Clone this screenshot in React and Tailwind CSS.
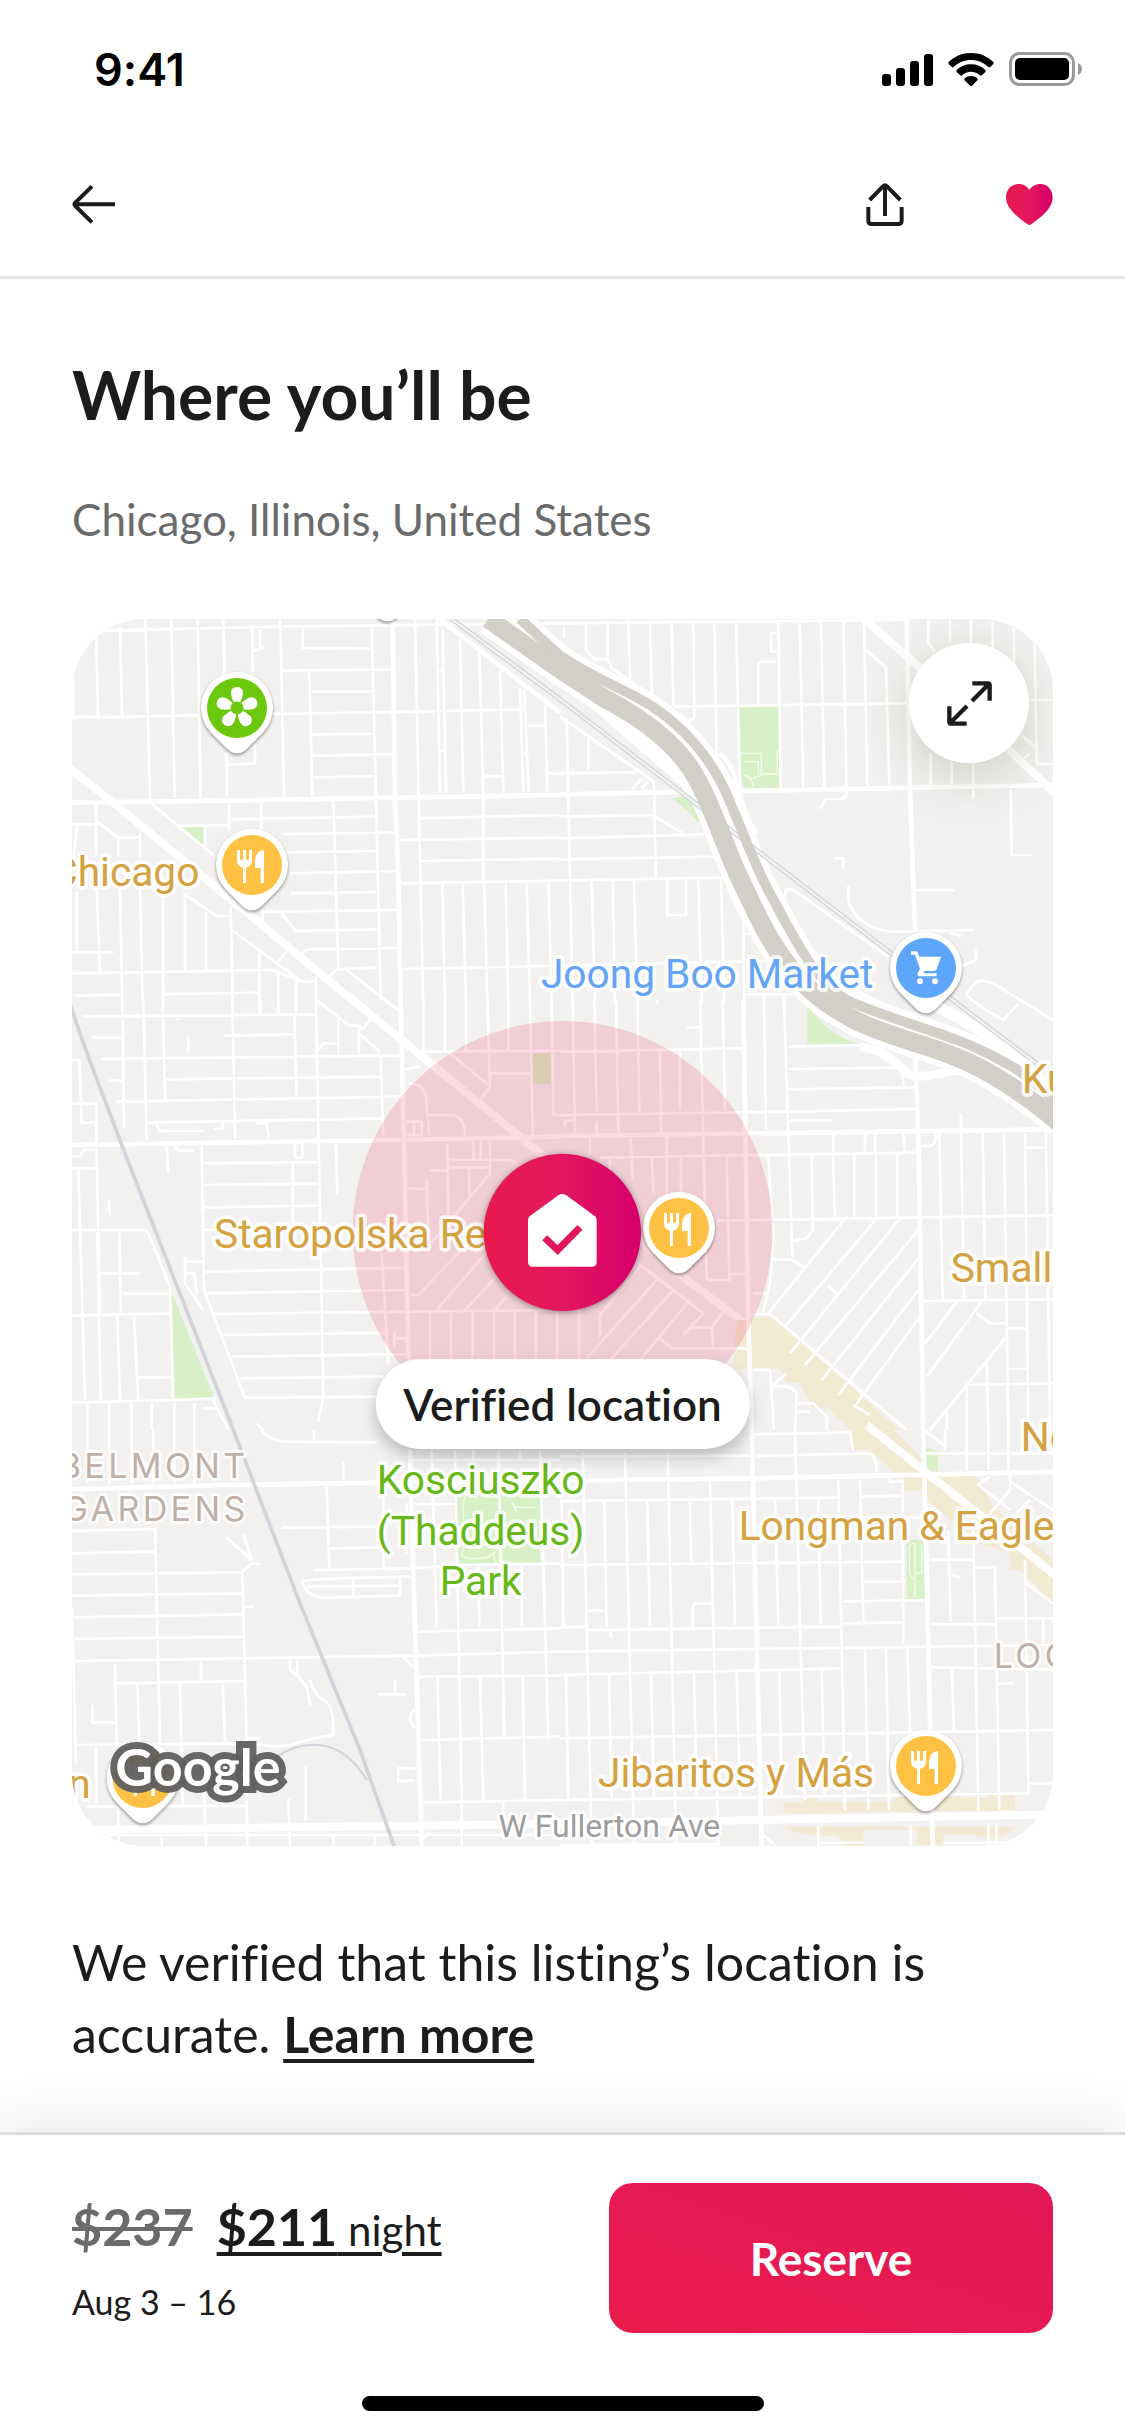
import { useState } from 'react';
import clsx from 'clsx';

// The map is drawn tile by tile, each tile in its own coordinates.
const TILES = [
  {
    id: 'nw',
    offset: 'translate(-36 -27)',
    minor:
      'M120 62L660 50L1500 40M108 60L114 318M180 50L186 316M256 27L270 568M334 30L344 565M413 27L422 565M490 30L494 200M500 430V560M577 50L578 190M661 27L672 560M748 188L757 558M935 50L948 560M40 200V320' +
      'M36 325L60 320L150 322L420 315M640 312L940 307L1390 298M668 182L995 178M728 55V114L930 116M755 245L940 244M757 374L940 371M757 437L998 433M757 502L940 499M600 60V118M580 122L615 113M502 464L585 460V400' +
      'M1065 27L1076 560L1090 1200M1130 30L1140 548M1148 60L1158 548M1200 85L1210 548M1258 125L1270 550V815M1320 180L1330 548M1380 235L1390 545M1393 240L1406 545M1455 285L1462 545M1405 346H1455M1465 490H1500M1272 500L1328 498M1135 180H1150M1140 422H1156M1385 430H1400' +
      'M275 582L460 735M860 1080L1020 1205M110 635L175 682H240M370 850L470 918H510M515 960L725 1115H765M108 585V740M508 580V660M604 578V660M820 570L835 1080M948 568L962 1170M240 670V745M175 682V740M50 650L42 740M36 643H105M350 648L505 645M435 650V710' +
      'M515 628L945 620M670 672L1008 668M680 727L945 723M690 790L1008 783M690 850L948 846M610 905L1012 900M665 910L708 963L950 958M740 1018L1015 1014M830 1078L950 1073M740 1018L715 1040M680 1025L650 1060M830 1078L808 1100' +
      'M50 845V1025M110 840L120 1085M180 840L187 1180M240 840L248 1180M308 850L310 1180M375 850V1080M438 905V1080M512 890L518 1180M598 1030V1210M608 900V945M655 1080V1210M708 1110V1215M768 1100V1180M36 1090L640 1080L725 1115M36 1027H160M48 1157L185 1154M310 1152L600 1148' +
      'M1080 625L1500 615M1020 690L1500 683M1080 753L1500 746M1025 820L1500 812M1030 1077L1500 1067M1147 820L1155 1180M1208 820L1218 1180M1273 820L1282 1180M1337 820L1345 1180M1400 820L1410 1180M1465 820L1475 1180',
    major: 'M36 578L500 572L1000 563L1500 555M998 27L1005 560L1015 800L1022 1180M1130 20L1500 308',
    avenue: 'M20 468L150 570L575 920L870 1165',
    park: 'M366 652H432V708Z',
  },
  {
    id: 'ne',
    offset: 'translate(1464 -27)',
    minor:
      'M0 40L1040 30M12 50V85M78 35V120L105 148H140M143 30V150L155 175L385 333L403 325L400 40M205 30L210 210M270 30L275 250M335 30L340 285M463 35L470 440M528 30L540 540M655 30L662 540M719 30L730 535M783 30L793 535M850 30L860 550Q855 568 830 567H795L782 597M912 30L922 530M915 118L978 172L988 525M595 285V160L602 155H650M650 70H633V125H650M330 290L1040 280' +
      'M1105 30V100L1125 125M1170 27V100M1233 27V100M1298 35V120M1362 50V160M1424 90L1430 460M1408 270H1479M1112 430V525M1175 455V525M1240 460V565M1385 375L1430 415M1385 450L1410 430M1430 462H1479M1352 540L1355 735H1415M1065 840H1185M865 828V870C880 930 940 965 1010 965L1240 960M825 745H852L848 775M675 930V850Q680 830 700 840L985 1040' +
      'M0 320L275 510Q285 525 283 560L287 800M20 325L38 1180M85 380V480M0 490L230 487M0 620L280 615M0 685L430 673M0 748L470 740M0 812L480 803M215 540L245 505M245 535L265 515M285 620L365 668M95 815L105 1180M158 812L165 1180M222 810L232 1180M322 810V915H378V810M415 805L425 1180M483 800L493 1180M550 930L553 1180M552 972H580M550 1153H700M612 1155V1180M672 1155V1180M0 1067L630 1052M292 1170V1180' +
      'M1220 1150L1250 1115Q1270 1108 1300 1120L1479 1230M1220 1150Q1215 1165 1330 1230L1375 1180M1248 1020V1050L1200 1070M1170 970L1205 978',
    major: 'M0 553L1500 525M1040 27L1050 540L1065 960M480 430C540 480 525 570 590 675',
    avenue: 'M910 25L1070 165L1500 562',
    park: 'M537 290H657L660 533H550L540 460ZM340 565L375 560L430 615L482 740L470 735L420 640ZM742 1180C760 1230 840 1290 900 1302H742Z',
    path: 'M542 430H604V495L580 505M550 455H595V490M604 492H652V420M552 495Q580 500 578 530',
  },
  {
    id: 'w',
    offset: 'translate(-36 1143)',
    minor:
      'M187 0L192 385M250 0L260 420M308 0L315 300M517 0L525 415M603 0V40M655 0V40M703 45L710 290M768 0L790 1190L775 1265M835 60V165M897 100V165M962 165L970 410M770 0L865 75L900 78L897 100L960 155M905 90L930 60M70 50L765 43M95 112H185M490 107L700 103M775 150L790 130H835M125 177L960 167H1020M145 242H185M315 238L960 230M170 305L1020 290M260 368L970 355M290 375L300 393H430M460 388L488 385V370M590 370H620L627 415M355 40V60M385 110V155' +
      'M36 310H110V365L65 370L58 180H36M108 370L120 940M36 470L60 468L70 450H105M36 505H105M345 440L355 452H405M320 440L325 520M145 600L150 645M705 430V472H727V430M828 430L832 585M425 440L432 870L555 1193L950 1190M430 490L770 487M432 555L775 551M432 622L775 617M432 690L700 685M698 490V680M435 815L1040 803M435 880L1045 870M465 942L1050 935M490 1005L975 998M515 1070L985 1063M540 1135L970 1130M965 760L985 1090' +
      'M36 690H255Q265 695 270 710L330 860L340 1200M120 820H240M183 880H325M178 690L183 940M36 947L330 940M55 505L75 1200M112 700L122 1200M172 950L180 1200M222 950L235 1205M235 1132H335M36 1208L340 1200L470 1195M82 1210V1290M148 1210V1290M215 1210V1290M275 1210V1290M343 1210V1290M403 1210V1290M460 1200L505 1290M430 1225H465M375 770V850L430 930M378 785H430M380 820H403L410 880M590 1270L610 1290' +
      'M1090 0V155M1155 0V155M1218 0V155M1345 0V155M1085 155L1500 152M1282 0L1290 260L1265 295M1170 160L1285 255M1285 220H1415M1410 0L1418 405M1475 0L1480 345L1530 347M1035 208L1080 200M1045 250Q1090 250 1098 290L1108 405M1105 345H1175Q1215 350 1215 405M1040 365H1085V405H1040M1062 365V405' +
      'M1162 430L1165 650M1165 480H1355L1375 495M1165 502H1290M1240 425V480H1262V425M1290 425V520L1105 740M1110 512H1165M1045 565L1100 567M1100 535L1105 700M1228 505V590M1050 885H1075L1260 690M1130 930L1290 745M1215 930L1300 840M1305 930L1340 890M1050 935L1560 930M1110 935V1090M1173 935V1090M1238 935V1090M1302 935V1090M1365 935V1090M1428 935V1090M1492 935V1090M1003 995V1040M1005 1015H1040M985 1063H1045',
    major: 'M36 435L1020 420L1500 410M1022 0L1032 430L1050 1290',
    avenue: 'M860 -15L1435 455L1860 825L2075 985L2460 1290',
    park: 'M330 865L463 1195Q400 1205 343 1195ZM1416 160H1473V252H1420Z',
  },
  {
    id: 'e',
    offset: 'translate(1464 1143)',
    district: 'M530 960H570L600 950L640 955L1020 1290H870L800 1220L760 1225L720 1150L680 1145L660 1105H580L520 1110Z',
    minor:
      'M38 0L45 400M103 0L110 335M168 0L175 400M232 0L238 335M300 150L303 400M360 150V330M420 0L440 840M488 0L495 330M612 0L618 390M672 0L697 770M0 155L550 145M380 82H420M0 345L690 335M15 380V362H40M110 365V400M685 140L920 135M690 207L1020 203M685 268L1065 262M690 362H815M690 335L1065 327M120 472L1075 458M90 415V465M150 475V520M212 415L218 540M275 470L280 580M320 410V590M363 470V590M500 470L508 830M625 465L640 720L630 850L610 935' +
      'M470 662L1530 645M820 400V455M915 400V455M945 400V455M1030 400L1035 455M755 465L758 690L740 715L700 722M818 460L825 650M883 460V650M948 460V650M1012 460V650M1085 438H1110Q1130 435 1128 395M1138 398L1148 900M1203 340V398L1212 900M1268 398L1277 900M1332 400L1345 1290M1395 400L1405 1290M1458 395L1470 1290M1398 443H1455M1090 903L1479 898M1030 205V260' +
      'M855 655L625 940M950 655L675 980M1020 655L690 1060M1075 690L735 1095M1075 775L785 1140M1075 870L835 1185M1080 950L890 1210M1190 905L1095 1030M1265 905L1100 1130M1335 1015L1110 1290M1215 1155L1479 1150M1250 940L1290 970H1335M1345 985H1400M1345 1107H1400M1160 1240V1290M1220 1160V1290M1280 1085L1285 1290M580 942H630L1040 1290M640 778H695L735 805M805 858L835 885M580 880H625' +
      'M440 840H510V822H560M235 790L430 940L370 1005M330 1045L560 1045M295 1010L335 1045M390 983H455L460 1045M455 983L490 935M240 800L120 945V1010M290 840L80 1075M340 870L150 1080M390 900L240 1080M58 930V1080M580 1110H630L642 1290M640 1160H690L710 1180L705 1290M640 1155L680 1120M710 1210H760L800 1250V1290M710 1235H750M880 1215L930 1245',
    major: 'M0 408L1500 388M550 0L565 960L575 1290M1065 160L1075 400L1090 1290',
  },
  {
    id: 'sw',
    offset: 'translate(-36 2433)',
    minor:
      'M82 0V160M148 0V160M215 0V160M280 0V160M343 0V160M403 0V160M605 0Q630 35 690 35L950 38M762 0V30M850 95V150M800 170L808 415M970 170V415M665 293L970 290M808 355L970 352M765 420L1050 415L1190 405L1500 400M725 455Q740 445 1050 440M725 455Q740 500 790 503L1020 497V445M740 470L1025 467M880 450V500' +
      'M36 303L285 297M36 370L285 365M36 433L545 427L575 400L600 403M575 390L550 310M575 390L500 322M36 497L545 490M36 562L545 553M36 627L550 620M45 693L1060 677L1500 665M285 290L300 940M547 430L560 940M550 530H580M165 700L170 940M423 695V750M172 760L550 753M232 760L238 940M360 760L368 1120M488 760L495 940M97 825V878H165M36 530L48 1000M48 945L560 940L650 950L690 945L760 925L820 915V880Q815 820 790 810Q760 790 750 750M690 690V720L712 737V690M712 737L740 770L752 830M560 925H600' +
      'M955 793H1035M1005 750V793M108 950V1120M80 1130L560 1127M430 1000L435 1180M560 1080L562 1248M685 1105L690 1248M737 1010V1170M175 1130V1248M305 1210V1248M438 1210V1248M820 1210V1248M945 1210V1248M110 1215H1480M1060 605L1500 595M1070 740L1500 737M1080 930L1500 920M1085 1118L1500 1110M1115 60L1130 590M1185 60L1205 1110M1255 410L1258 590M1315 60L1333 930M1385 410V590M1440 60L1465 930M1132 740L1142 1110M1260 740L1270 1110M1388 740L1395 1110M1065 222H1190M1050 90H1500M1240 60V90M1380 60V90' +
      'M1065 840Q1035 860 1065 895M1065 1015H1015V1055L1065 1050M1030 680L1060 712M1040 220V370M1205 1110V1248M1330 1115V1150M1085 1225L1110 1210',
    major: 'M36 178L500 165L1500 150M1050 60L1060 430L1075 900L1085 1260',
    avenue: 'M60 1200L1480 1182',
    park: 'M1187 195H1440V402H1195Z',
    path: 'M1205 380Q1215 330 1210 250T1250 205M1205 380Q1280 400 1310 360T1360 340M1355 215L1370 245M1365 232H1430M1300 375L1310 400',
  },
  {
    id: 'se',
    offset: 'translate(1464 2433)',
    district:
      'M875 0H1000L1130 130L1250 140L1300 230L1479 390V520L1380 420H1350V370L1260 340L1100 210L1090 180H1030V130L1000 125L930 60H875ZM670 1118H730V1105H775V1115H1000V1100L1130 1098L1280 1105V1095H1365V1140L670 1150ZM670 1190H1365V1200L1300 1230L1240 1215H1150V1245H1070V1200H910V1248H860L830 1215L780 1220L700 1205Z',
    minor:
      'M68 65L95 1248M195 65L222 1248M323 65L348 1248M450 150L475 1248M517 210L525 585M645 210L655 585M705 0L720 590L735 1110M775 210L782 580M835 150L855 1140M900 150L910 575M1028 150L1030 640M262 215L270 590M390 215L393 395M133 215L140 590M5 215L10 590M0 213L830 203M905 200L1025 197M0 405L1035 395M0 593L75 590M80 600L845 590M850 515L1090 510M850 580L1025 577M80 542H138M152 600V625M398 590V530L405 520H455M910 455H1035' +
      'M0 665L1479 645M0 735L850 715M0 925L1479 900M0 1110L1405 1090V1060H1479M18 735L25 1110M147 735L155 1110M273 735L282 1100M402 730L410 1100M530 725L540 1100M658 720L665 1100M785 720L793 1100M915 655L925 1140M978 655L987 1140M1042 650L1050 910M1165 300L1172 575M1240 300L1255 1140M1305 415L1318 1140M1395 390L1405 1060M1175 715L1182 900M1115 583H1305M1310 565H1479M1115 712L1479 718M1110 390L1240 388M1245 412H1305V500M1450 570V640M1400 460L1479 520M1175 435L1200 440M1315 760H1360' +
      'M580 13L870 8L880 60M590 77L930 70Q950 80 950 125M0 80L570 77M990 140V155H1030M1250 160L1350 240M1290 140L1250 165M1350 130V180L1290 250M1350 155L1479 240M1410 210L1370 250M1100 70H1479M1155 0V60M1220 0V120M1285 0V120M1345 0V120M1095 0L1150 45M905 262H1100M0 1245L480 1243M775 1185V1248M1052 1185V1248M1285 1180V1248M1310 1180V1248M610 1215L640 1240M775 1238H910M1150 1238H1479',
    major: 'M0 152L580 145L1500 125M575 0L605 1248M1090 0L1105 640L1118 1248',
    avenue: 'M920 -15L1500 447M0 1182L480 1172L1500 1153',
    park: 'M1098 50L1133 65V122H1100ZM1040 330H1090L1095 507H1040Z',
    path: 'M1048 430V350Q1050 340 1065 340V500M1085 345V430H1068M1048 430L1060 450',
  },
];

const EXPRESSWAY_WEST =
  'M-215 27L0 178L130 263C220 310 330 380 395 480C450 570 480 670 530 785C580 890 620 985 680 1060C740 1140 800 1185 880 1228C1000 1290 1150 1310 1280 1385C1370 1435 1430 1480 1500 1540';
const EXPRESSWAY_EAST =
  'M-120 27L0 137C100 205 200 240 270 285C370 350 440 430 490 530C540 640 580 760 630 850C690 960 760 1110 860 1170C1000 1235 1180 1270 1320 1350C1400 1390 1440 1430 1500 1490';
const COMMUTER_RAIL = 'M-325 27L0 268L1000 1035L1290 1255L1430 1360';

const FOOD_LABELS = [
  { text: 'Chicago', x: 382, y: 801, anchor: 'end' },
  { text: 'Staropolska Res', x: 426, y: 1888 },
  { text: 'Small', x: 2636, y: 1988 },
  { text: 'Ku', x: 2850, y: 1421 },
  { text: 'No', x: 2846, y: 2495 },
  { text: 'Longman & Eagle', x: 2000, y: 2763 },
  { text: 'Jibaritos y Más', x: 2406, y: 3503, anchor: 'end' },
  { text: 'n', x: 56, y: 3538, anchor: 'end' },
];

const FOOD_PINS = [
  { x: 540, y: 738 },
  { x: 1821, y: 1827 },
  { x: 2562, y: 3441 },
  { x: 212, y: 3477 },
];

function Pin({ x, y, color, children }) {
  return (
    <g transform={`translate(${x} ${y})`}>
      <path
        d="M-80 72L-30 122Q0 150 30 122L80 72A108 108 0 1 0 -80 72Z"
        fill="#fff"
        className="drop-shadow-[0_5px_5px_rgba(0,0,0,0.4)]"
      />
      <circle r="90" fill={color} />
      {children}
    </g>
  );
}

function Fork() {
  return (
    <g fill="#fff">
      <path d="M-45 -45h9v29h9v-29h9v29h9v-29h9v31q0 19-18 22V54h-9V8Q-45 5-45 -14Z" />
      <path d="M36 -45V54H26V9H9V-14Q11 -42 36 -45Z" />
    </g>
  );
}

function Flower() {
  return (
    <g fill="#fff">
      {[0, 72, 144, 216, 288].map((angle) => (
        <path
          key={angle}
          transform={`rotate(${angle})`}
          d="M0 -63C13 -63 19 -53 18 -43C17 -32 12 -24 10 -17Q0 -22 -10 -17C-12 -24 -17 -32 -18 -43C-19 -53 -13 -63 0 -63Z"
        />
      ))}
    </g>
  );
}

function Cart() {
  return (
    <g fill="#fff">
      <path d="M-45 -50H-30Q-26 -50 -24 -45L-20 -34H45L32 4Q30 9 24 9H-3L-9 16H32V25H-22Q-28 22 -25 16L-18 2L-33 -40H-45Z" />
      <circle cx="-18" cy="40" r="9" />
      <circle cx="27" cy="40" r="9" />
    </g>
  );
}

function Map() {
  return (
    <svg
      viewBox="0 0 2943 3681"
      className="block h-full w-full bg-[#f2f1f0] font-['Roboto',sans-serif]"
      role="img"
      aria-label="Map of Chicago around the listing"
    >
      <defs>
        <linearGradient id="brand" x1="0" x2="1" y1="0" y2="0">
          <stop offset="0" stopColor="#e8194a" />
          <stop offset="0.5" stopColor="#e3175f" />
          <stop offset="0.95" stopColor="#d7006b" />
        </linearGradient>
      </defs>

      {TILES.map((tile) => (
        <g key={tile.id} transform={tile.offset} fill="none" stroke="#fff">
          <path d={tile.district} fill="#f2ead2" stroke="none" />
          <path d={tile.park} fill="#d7f0c6" stroke="none" />
          <path d={tile.path} strokeWidth="4" strokeOpacity="0.7" />
          <path d={tile.minor} strokeWidth="8" strokeLinejoin="round" />
          <path d={tile.major} strokeWidth="14" />
          <path d={tile.avenue} strokeWidth="24" />
        </g>
      ))}

      {/* freight line */}
      <g transform="translate(-36 1143)" fill="none" stroke="#d1d5d9">
        <path d="M30 10C80 170 140 310 185 435L340 830L520 1290L720 1810L900 2250L1010 2560" strokeWidth="11" />
        <path d="M650 2270C740 2210 850 2220 920 2340" strokeWidth="6" />
      </g>

      {/* expressway */}
      <g transform="translate(1464 -27)" fill="none">
        <path d="M90 285C200 345 300 390 440 600L400 560L95 295Z" fill="#fff" />
        <g stroke="#fff">
          <path d={EXPRESSWAY_WEST} strokeWidth="92" />
          <path d={EXPRESSWAY_EAST} strokeWidth="66" />
          <path d="M900 1310Q980 1320 1040 1390C1100 1420 1180 1360 1260 1390Q1360 1430 1479 1560" strokeWidth="26" />
          <path d="M880 1150Q1000 1220 1100 1230M1130 1190Q1240 1240 1400 1360" strokeWidth="34" />
          <path d="M480 740Q520 880 640 1060" strokeWidth="26" />
        </g>
        <path d={COMMUTER_RAIL} stroke="#c8cfd6" strokeWidth="14" />
        <path d={COMMUTER_RAIL} stroke="#f2f1f0" strokeWidth="8" />
        <g stroke="#d2cfc8">
          <path d={EXPRESSWAY_WEST} strokeWidth="56" />
          <path d={EXPRESSWAY_EAST} strokeWidth="30" />
        </g>
      </g>

      {/* listing radius */}
      <circle cx="1472" cy="1836" r="630" fill="rgba(231,52,96,0.18)" />

      <g className="text-[122px]" stroke="#fff" strokeWidth="22" strokeLinejoin="round" paintOrder="stroke" strokeOpacity="0.85">
        <g fill="#d4a240">
          {FOOD_LABELS.map((label) => (
            <text key={label.text} x={label.x} y={label.y} textAnchor={label.anchor}>
              {label.text}
            </text>
          ))}
        </g>
        <text x="2404" y="1108" textAnchor="end" fill="#64a4f6">Joong Boo Market</text>
        <g fill="#67b817" textAnchor="middle">
          <text x="1226" y="2626">Kosciuszko</text>
          <text x="1226" y="2778">(Thaddeus)</text>
          <text x="1226" y="2928">Park</text>
        </g>
      </g>
      <g className="font-['Inter',sans-serif] text-[102px] tracking-widest" fill="#bfb0a8" stroke="#fff" strokeWidth="16" strokeLinejoin="round" paintOrder="stroke" strokeOpacity="0.85">
        <text x="530" y="2578" textAnchor="end">BELMONT</text>
        <text x="530" y="2706" textAnchor="end">GARDENS</text>
        <text x="2765" y="3146">LOGAN</text>
      </g>
      <text x="1612" y="3655" textAnchor="middle" className="text-[96px]" fill="#9d9d9d" stroke="#fff" strokeWidth="16" strokeLinejoin="round" paintOrder="stroke">
        W Fullerton Ave
      </text>

      <Pin x={946} y={-129} color="#fff" />
      <Pin x={495} y={267} color="#6cc80c"><Flower /></Pin>
      <Pin x={2562} y={1047} color="#5ea6fb"><Cart /></Pin>
      {FOOD_PINS.map((pin) => (
        <Pin key={pin.y} x={pin.x} y={pin.y} color="#ffc143"><Fork /></Pin>
      ))}

      <g transform="translate(1471 1840)">
        <circle r="236" fill="url(#brand)" className="drop-shadow-[0_4px_10px_rgba(0,0,0,0.4)]" />
        <path d="M-12 -111Q0 -119 12 -111L98 -48Q103 -43 103 -36V88Q103 103 88 103H-88Q-103 103 -103 88V-36Q-103 -43 -98 -48Z" fill="#fff" />
        <path d="M-53 16L-14 53L53 -15" fill="none" stroke="#e2165e" strokeWidth="21" />
      </g>

      <text x="130" y="3500" className="font-['Lato',sans-serif] text-[156px] font-bold" fill="#fff" stroke="#5f5f5f" strokeOpacity="0.95" strokeWidth="42" paintOrder="stroke">
        Google
      </text>
    </svg>
  );
}

function StatusBar() {
  return (
    <div className="flex h-[138px] items-center justify-between pl-[94px] pr-[43px] text-black">
      <span className="font-['Inter',sans-serif] text-[45px] leading-none font-semibold">9:41</span>
      <div className="flex items-center gap-[15px]">
        <svg viewBox="0 0 51 33" className="h-[33px] w-[51px]" aria-label="Signal">
          <rect x="0" y="21" width="9" height="12" rx="3" />
          <rect x="14" y="15" width="9" height="18" rx="3" />
          <rect x="28" y="8" width="9" height="25" rx="3" />
          <rect x="42" y="1" width="9" height="32" rx="3" />
        </svg>
        <svg viewBox="0 0 138 99" className="h-[33px] w-[46px]" aria-label="Wi-Fi">
          <path d="M69 0C96 0 118 10 136 27Q138 30 136 33L127 42Q124 44 121 42C106 28 89 21 69 21S32 28 17 42Q14 44 11 42L2 33Q0 30 2 27C20 10 42 0 69 0Z" />
          <path d="M69 34C86 34 101 40 112 51Q114 54 112 57L102 67Q99 69 96 67C88 60 79 56 69 56S50 60 42 67Q39 69 36 67L26 57Q24 54 26 51C37 40 52 34 69 34Z" />
          <path d="M69 69Q80 69 88 76Q90 79 88 82L72 98Q69 100 66 98L50 82Q48 79 50 76Q58 69 69 69Z" />
        </svg>
        <svg viewBox="0 0 73 34" className="h-[34px] w-[73px]" aria-label="Battery">
          <rect x="1.5" y="1.5" width="63" height="31" rx="9" fill="none" stroke="#9b9b9b" strokeWidth="3" />
          <rect x="6" y="6" width="54" height="22" rx="5" />
          <path d="M69 11q4 2 4 6t-4 6Z" fill="#9b9b9b" />
        </svg>
      </div>
    </div>
  );
}

function NavBar() {
  const [saved, setSaved] = useState(true);

  return (
    <nav className="flex h-[138px] items-center justify-between px-[72px] pb-1.5">
      <button type="button" aria-label="Back">
        <svg viewBox="0 0 129 117" className="h-[39px] w-[43px]" fill="none" stroke="#1c1c1c" strokeWidth="12">
          <path d="M129 58H10M60 4L10 53Q5 58 10 63L60 112" />
        </svg>
      </button>
      <div className="flex items-center gap-[102px]">
        <button type="button" aria-label="Share">
          <svg viewBox="0 0 114 129" className="h-[43px] w-[38px]" fill="none" stroke="#1c1c1c" strokeWidth="12">
            <path d="M57 99V8M11 51L51 10Q57 4 63 10L103 51M7 72V113Q7 123 17 123H97Q107 123 107 113V72" />
          </svg>
        </button>
        <button type="button" aria-label="Save" aria-pressed={saved} onClick={() => setSaved(!saved)}>
          <svg viewBox="0 0 141 123" className="h-[41px] w-[47px]">
            <defs>
              <linearGradient id="heart">
                <stop offset="0" stopColor="#e8194a" />
                <stop offset="0.5" stopColor="#e3175f" />
                <stop offset="0.95" stopColor="#d7006b" />
              </linearGradient>
            </defs>
            <path
              d="M70 17C80 4 91 0 103 0C125 0 140 18 140 40C140 72 108 98 76 121Q70 125 65 121C32 98 0 72 0 40C0 18 15 0 38 0C50 0 61 4 70 17Z"
              fill={saved ? 'url(#heart)' : '#8a8a8a'}
            />
          </svg>
        </button>
      </div>
    </nav>
  );
}

export default function App() {
  const [expanded, setExpanded] = useState(false);

  return (
    <div className="flex min-h-screen flex-col bg-white font-['Lato',sans-serif] text-[#1c1c1c] [font-variant-ligatures:none]">
      <header className="border-b-[3px] border-[#e5e5e5]">
        <StatusBar />
        <NavBar />
      </header>

      <main className="flex-1 px-[72px] pt-[76px]">
        <h1 className="text-[66px] leading-[80px] font-bold">Where you’ll be</h1>
        <p className="mt-[56px] text-[44px] leading-[56px] text-[#6b6b6b]">Chicago, Illinois, United States</p>

        <div className={clsx('relative mt-[72px] overflow-hidden rounded-[72px]', expanded ? 'aspect-[1/2]' : 'aspect-[981/1227]')}>
          <Map />
          <button
            type="button"
            aria-label="Expand map"
            onClick={() => setExpanded(!expanded)}
            className="absolute top-6 right-6 flex size-[120px] items-center justify-center rounded-full bg-white shadow-[0_12px_48px_rgba(90,80,40,0.22)]"
          >
            <svg viewBox="0 0 135 135" className="size-[45px]" fill="none" stroke="#1c1c1c" strokeWidth="13">
              <path d="M75 60L128 7M76 7H122Q128 7 128 13V59M60 75L7 128M7 76V122Q7 128 13 128H59" />
            </svg>
          </button>
          <div className="absolute top-1/2 left-1/2 mt-[126px] -translate-x-1/2 rounded-full bg-white px-7 py-4 text-[44px] leading-[58px] font-semibold whitespace-nowrap shadow-[0_8px_16px_rgba(0,0,0,0.22)]">
            Verified location
          </div>
        </div>

        <p className="mt-[80px] mb-[60px] text-[50px] leading-[72px]">
          We verified that this listing’s location is accurate.{' '}
          <a href="#location" className="font-bold underline decoration-[4px] underline-offset-[6px]">
            Learn more
          </a>
        </p>
      </main>

      <footer className="sticky bottom-0 border-t-[3px] border-[#dcdcdc] bg-white shadow-[0_-12px_48px_rgba(0,0,0,0.08)]">
        <div className="flex items-center justify-between px-[72px] pt-12">
          <div>
            <p className="flex items-baseline gap-6 leading-[72px]">
              <s className="text-[52px] font-bold text-[#6b6b6b] decoration-[4px]">$237</s>
              <span className="text-[42px] underline decoration-[4px] underline-offset-[6px]">
                <strong className="text-[52px]">$211</strong> night
              </span>
            </p>
            <p className="mt-3 text-[34px] leading-[48px]">Aug 3 – 16</p>
          </div>
          <button
            type="button"
            className="h-[150px] w-[444px] rounded-3xl bg-linear-to-tr from-[#ea1b4c] to-[#e31757] text-[46px] font-bold text-white"
          >
            Reserve
          </button>
        </div>
        <div className="mx-auto mt-[63px] mb-[25px] h-[15px] w-[402px] rounded-full bg-black" />
      </footer>
    </div>
  );
}
